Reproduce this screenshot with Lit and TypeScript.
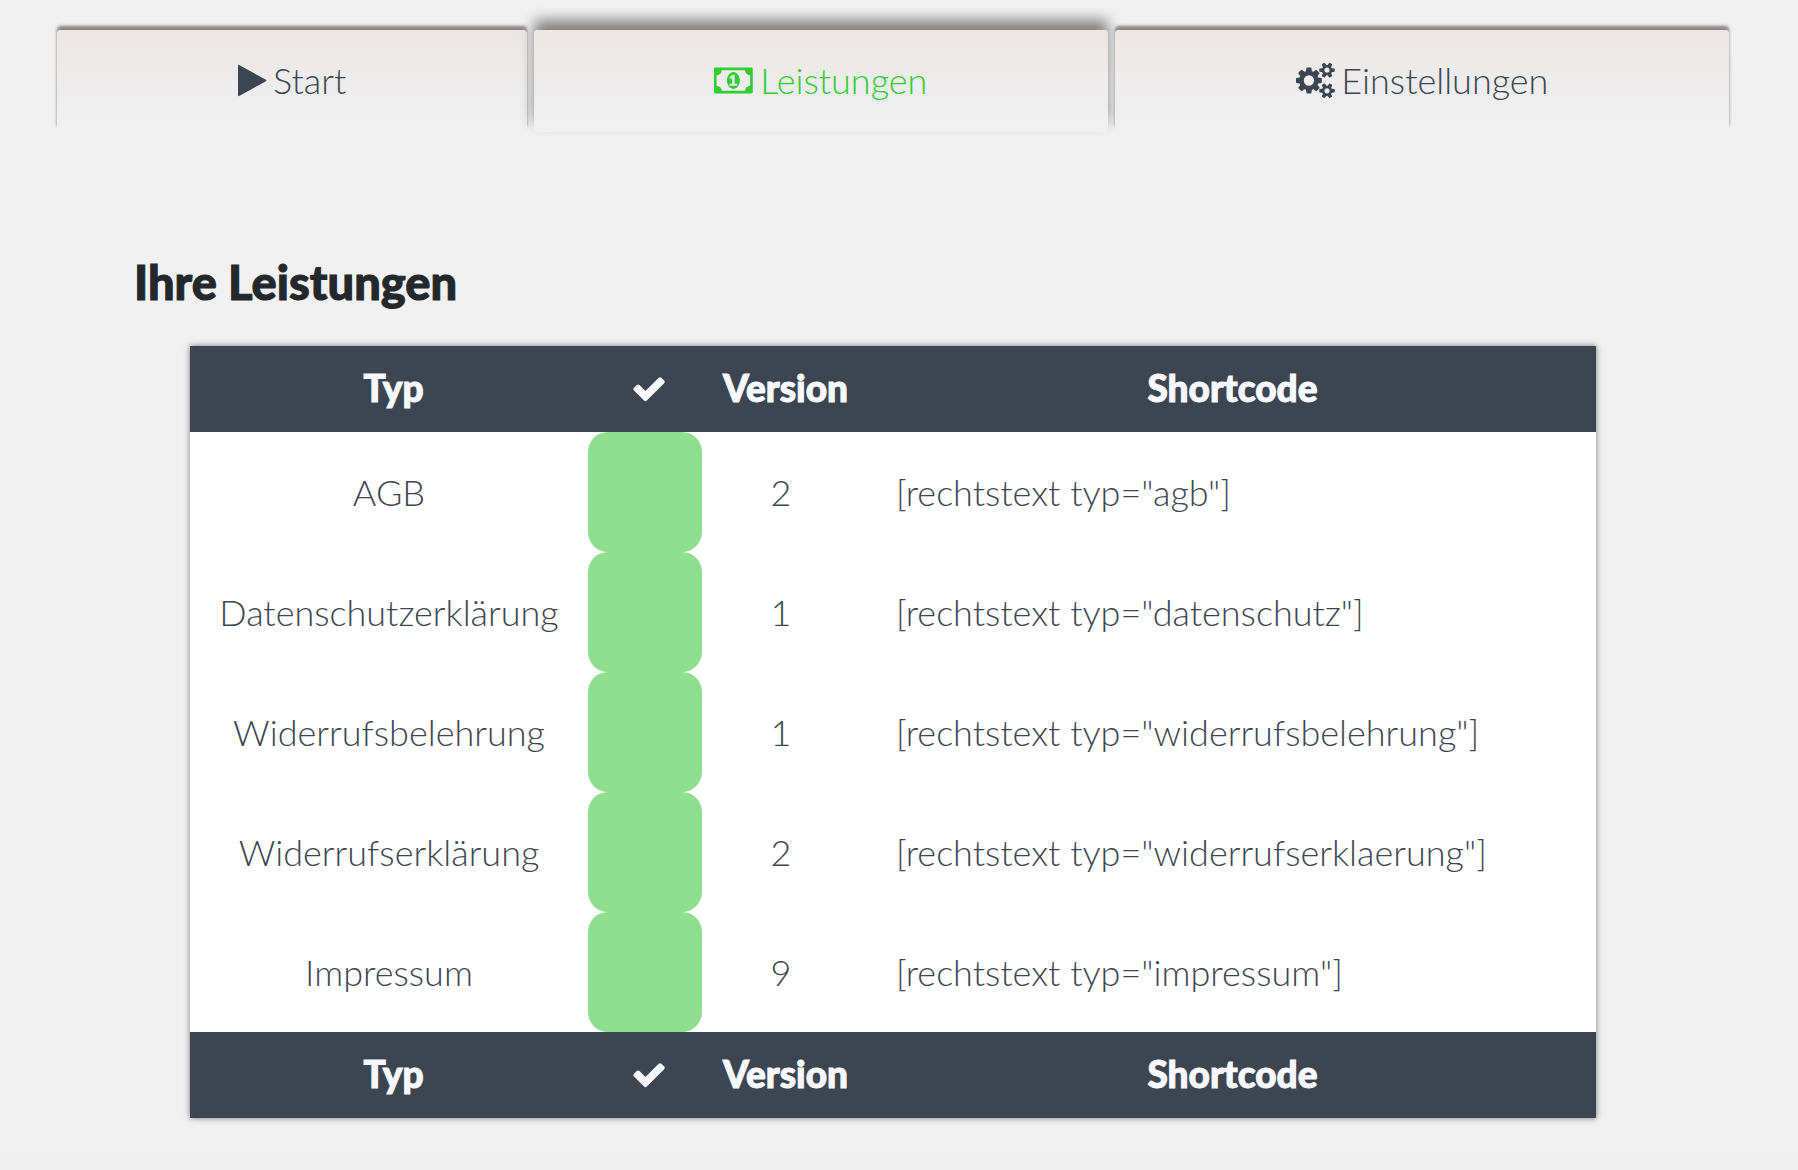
import { LitElement, html, css, svg } from "lit";
import { customElement, state } from "lit/decorators.js";

const ICONS = {
  play: { box: "0 0 1408 1536", path: "M1384 609l-1328 -738q-23 -13 -39.500 -3t-16.500 36v1472q0 26 16.500 36t39.500 -3l1328 -738q23 -13 23 -31t-23 -31z" },
  money: { box: "0 0 1920 1536", path: "M768 384h384v96h-128v448h-114l-148 -137l77 -80q42 37 55 57h2v-288h-128v-96zM1280 640q0 -70 -21 -142t-59.500 -134t-101.500 -101t-138 -39t-138 39t-101.500 101t-59.500 134t-21 142t21 142t59.500 134t101.500 101t138 39t138 -39t101.500 -101t59.500 -134t21 -142zM1792 384 v512q-106 0 -181 75t-75 181h-1152q0 -106 -75 -181t-181 -75v-512q106 0 181 -75t75 -181h1152q0 106 75 181t181 75zM1920 1216v-1152q0 -26 -19 -45t-45 -19h-1792q-26 0 -45 19t-19 45v1152q0 26 19 45t45 19h1792q26 0 45 -19t19 -45z" },
  cogs: { box: "0 0 1920 1536", path: "M896 640q0 106 -75 181t-181 75t-181 -75t-75 -181t75 -181t181 -75t181 75t75 181zM1664 128q0 52 -38 90t-90 38t-90 -38t-38 -90q0 -53 37.500 -90.500t90.500 -37.500t90.500 37.500t37.500 90.500zM1664 1152q0 52 -38 90t-90 38t-90 -38t-38 -90q0 -53 37.500 -90.500t90.500 -37.500 t90.500 37.500t37.500 90.500zM1280 731v-185q0 -10 -7 -19.500t-16 -10.500l-155 -24q-11 -35 -32 -76q34 -48 90 -115q7 -11 7 -20q0 -12 -7 -19q-23 -30 -82.500 -89.500t-78.500 -59.500q-11 0 -21 7l-115 90q-37 -19 -77 -31q-11 -108 -23 -155q-7 -24 -30 -24h-186q-11 0 -20 7.500t-10 17.500 l-23 153q-34 10 -75 31l-118 -89q-7 -7 -20 -7q-11 0 -21 8q-144 133 -144 160q0 9 7 19q10 14 41 53t47 61q-23 44 -35 82l-152 24q-10 1 -17 9.500t-7 19.500v185q0 10 7 19.500t16 10.500l155 24q11 35 32 76q-34 48 -90 115q-7 11 -7 20q0 12 7 20q22 30 82 89t79 59q11 0 21 -7 l115 -90q34 18 77 32q11 108 23 154q7 24 30 24h186q11 0 20 -7.500t10 -17.500l23 -153q34 -10 75 -31l118 89q8 7 20 7q11 0 21 -8q144 -133 144 -160q0 -8 -7 -19q-12 -16 -42 -54t-45 -60q23 -48 34 -82l152 -23q10 -2 17 -10.500t7 -19.500zM1920 198v-140q0 -16 -149 -31 q-12 -27 -30 -52q51 -113 51 -138q0 -4 -4 -7q-122 -71 -124 -71q-8 0 -46 47t-52 68q-20 -2 -30 -2t-30 2q-14 -21 -52 -68t-46 -47q-2 0 -124 71q-4 3 -4 7q0 25 51 138q-18 25 -30 52q-149 15 -149 31v140q0 16 149 31q13 29 30 52q-51 113 -51 138q0 4 4 7q4 2 35 20 t59 34t30 16q8 0 46 -46.500t52 -67.500q20 2 30 2t30 -2q51 71 92 112l6 2q4 0 124 -70q4 -3 4 -7q0 -25 -51 -138q17 -23 30 -52q149 -15 149 -31zM1920 1222v-140q0 -16 -149 -31q-12 -27 -30 -52q51 -113 51 -138q0 -4 -4 -7q-122 -71 -124 -71q-8 0 -46 47t-52 68 q-20 -2 -30 -2t-30 2q-14 -21 -52 -68t-46 -47q-2 0 -124 71q-4 3 -4 7q0 25 51 138q-18 25 -30 52q-149 15 -149 31v140q0 16 149 31q13 29 30 52q-51 113 -51 138q0 4 4 7q4 2 35 20t59 34t30 16q8 0 46 -46.500t52 -67.500q20 2 30 2t30 -2q51 71 92 112l6 2q4 0 124 -70 q4 -3 4 -7q0 -25 -51 -138q17 -23 30 -52q149 -15 149 -31z" },
  check: { box: "0 0 1792 1536", path: "M1671 970q0 -40 -28 -68l-724 -724l-136 -136q-28 -28 -68 -28t-68 28l-136 136l-362 362q-28 28 -28 68t28 68l136 136q28 28 68 28t68 -28l294 -295l656 657q28 28 68 28t68 -28l136 -136q28 -28 28 -68z" },
};

type IconName = keyof typeof ICONS;

const icon = (name: IconName) => html`
  <svg class="icon ${name}" viewBox=${ICONS[name].box} aria-hidden="true">
    ${svg`<path transform="translate(0 1408) scale(1 -1)" d=${ICONS[name].path} />`}
  </svg>
`;

const TABS: { label: string; icon: IconName; id: string }[] = [
  { label: "Start", icon: "play", id: "start" },
  { label: "Leistungen", icon: "money", id: "leistungen" },
  { label: "Einstellungen", icon: "cogs", id: "einstellungen" },
];

const ROWS = [
  { type: "AGB", version: 2, code: "agb" },
  { type: "Datenschutzerklärung", version: 1, code: "datenschutz" },
  { type: "Widerrufsbelehrung", version: 1, code: "widerrufsbelehrung" },
  { type: "Widerrufserklärung", version: 2, code: "widerrufserklaerung" },
  { type: "Impressum", version: 9, code: "impressum" },
];

@customElement("app-root")
export class AppRoot extends LitElement {
  @state() private active = "leistungen";

  static styles = css`
    :host {
      display: block;
      box-sizing: border-box;
      min-height: 100vh;
      padding: 30px 69px 52px 57px;
      background: linear-gradient(to top, #eeeeee, #f1f1f1 32px);
      color: #3d4650;
      font: 300 36px/44px Lato, "Liberation Sans", sans-serif;
    }
    .icon {
      height: 31px;
      overflow: visible;
      fill: currentColor;
      flex: none;
    }
    .tabs {
      display: flex;
      gap: 7px;
    }
    .tab {
      flex: 1 1 auto;
      display: flex;
      align-items: center;
      justify-content: center;
      gap: 7px;
      box-sizing: border-box;
      height: 102px;
      padding-bottom: 2px;
      border-radius: 4px;
      background: linear-gradient(#ece7e5, #eeeded 60%, #f1f1f1);
      box-shadow: 0 -4px 4px -1px #808080, 0 -4px 2px #b0b0b0;
      color: inherit;
      text-decoration: none;
    }
    .tab.active {
      color: #3c3;
      box-shadow: 0 -10px 14px #808080;
    }
    .content {
      padding: 122px 133px 0 77px;
    }
    h1,
    th {
      font-weight: 900;
      -webkit-text-stroke: 1px currentColor;
    }
    h1 {
      margin: 0;
      color: #23282d;
      font-size: 47px;
      line-height: 56px;
    }
    .services {
      width: calc(100% - 56px);
      margin: 36px 0 0 56px;
      border-collapse: collapse;
      background: #ffffff;
      box-shadow: 0 0 6px rgba(0, 0, 0, 0.5);
      text-align: center;
    }
    th {
      box-sizing: border-box;
      height: 86px;
      padding: 0 0 2px 9px;
      background: #3d4650;
      color: #f8f8ff;
      font-size: 37px;
    }
    th .icon {
      display: block;
      margin: 0 auto;
    }
    td {
      height: 120px;
      padding: 0;
    }
    .col-type { width: 398px; }
    .col-state { width: 114px; }
    .col-version { width: 158px; }
    .state {
      height: 120px;
      border-radius: 20px;
      background: #8fdf90;
    }
    .code {
      padding-left: 36px;
      text-align: left;
    }
  `;

  private labels() {
    return html`
      <tr>
        <th scope="col">Typ</th>
        <th scope="col" aria-label="Aktiv">${icon("check")}</th>
        <th scope="col">Version</th>
        <th scope="col">Shortcode</th>
      </tr>
    `;
  }

  render() {
    return html`
      <nav class="tabs">
        ${TABS.map(
          (tab) => html`
            <a
              class="tab ${tab.id === this.active ? "active" : ""}"
              href="#${tab.id}"
              @click=${() => (this.active = tab.id)}
              >${icon(tab.icon)}<span>${tab.label}</span></a
            >
          `
        )}
      </nav>
      <main class="content">
        <h1>Ihre Leistungen</h1>
        <table class="services">
          <colgroup>
            <col class="col-type" />
            <col class="col-state" />
            <col class="col-version" />
            <col />
          </colgroup>
          <thead>${this.labels()}</thead>
          <tbody>
            ${ROWS.map(
              (row) => html`
                <tr>
                  <td>${row.type}</td>
                  <td><div class="state"></div></td>
                  <td>${row.version}</td>
                  <td class="code">[rechtstext typ="${row.code}"]</td>
                </tr>
              `
            )}
          </tbody>
          <tfoot>${this.labels()}</tfoot>
        </table>
      </main>
    `;
  }
}
